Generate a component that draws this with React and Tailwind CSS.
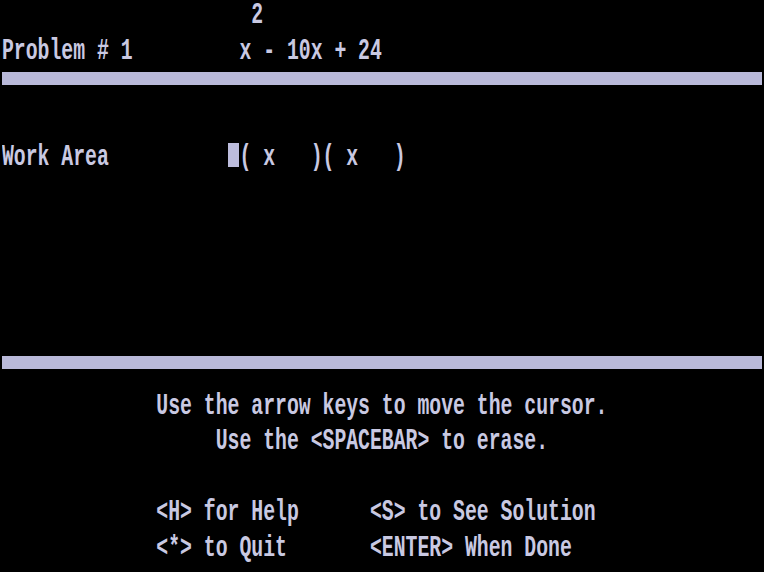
import React from "react";

const T = ({ children }) => (
  <span className="inline-block origin-top scale-y-[1.45] whitespace-pre leading-[20px]">{children}</span>
);

const Row = ({ children }) => (
  <div className="flex h-[35.5px] items-start">{children}</div>
);

const Bar = () => (
  <div className="h-[35.5px]">
    <div className="h-[13px] bg-[#b9b9d9]" />
  </div>
);

export default function App() {
  return (
    <div
      className="w-[764px] h-[572px] overflow-hidden bg-black pt-[1px] px-[2px] text-[19.79px] font-bold text-[#c9c9e2]"
      style={{ fontFamily: '"Liberation Mono", monospace' }}
    >
      <Row><T>{"                     2"}</T></Row>
      <Row><T>{"Problem # 1         x - 10x + 24"}</T></Row>
      <Bar />
      <Row />
      <Row>
        <T>{"Work Area          "}</T>
        <span className="inline-block h-[24px] w-[11.875px] bg-[#bdbddd]" />
        <T>{"( x   )( x   )"}</T>
      </Row>
      <Row />
      <Row />
      <Row />
      <Row />
      <Row />
      <Bar />
      <Row><T>{"             Use the arrow keys to move the cursor."}</T></Row>
      <Row><T>{"                  Use the <SPACEBAR> to erase."}</T></Row>
      <Row />
      <Row><T>{"             <H> for Help      <S> to See Solution"}</T></Row>
      <Row><T>{"             <*> to Quit       <ENTER> When Done"}</T></Row>
    </div>
  );
}
